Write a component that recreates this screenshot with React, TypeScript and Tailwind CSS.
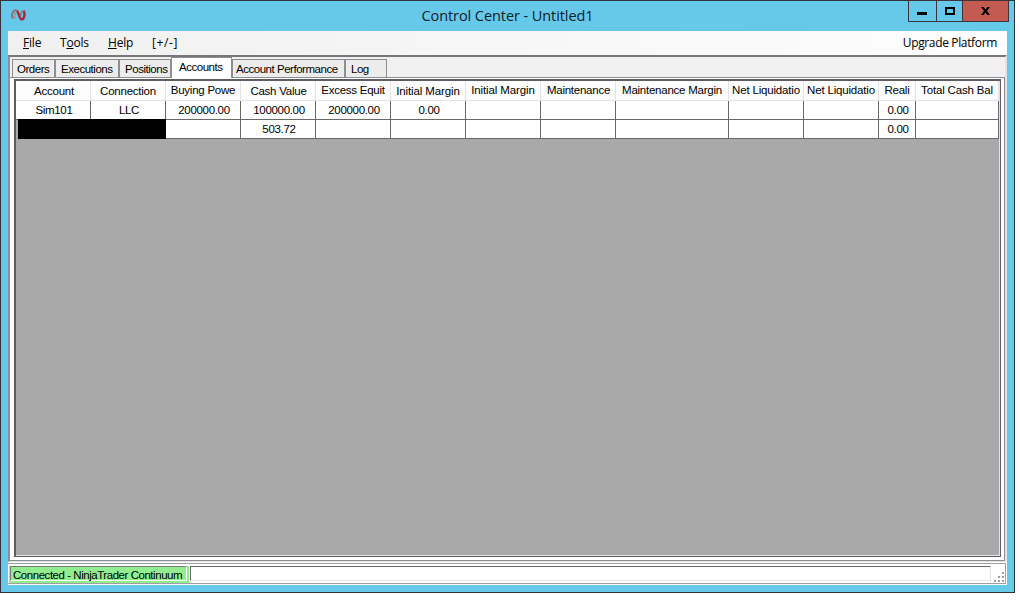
import { ReactNode } from 'react';

interface Column {
  title: string;
  width: string;
  pad?: string;
}

interface AccountRow {
  hidden?: boolean;
  cells: string[];
}

const columns: Column[] = [
  { title: 'Account', width: 'w-[75px]', pad: 'pt-px pl-[2px]' },
  { title: 'Connection', width: 'w-[75px]', pad: 'pt-px' },
  { title: 'Buying Powe', width: 'w-[75px]' },
  { title: 'Cash Value', width: 'w-[75px]', pad: 'pt-px pl-px' },
  { title: 'Excess Equit', width: 'w-[75px]' },
  { title: 'Initial Margin', width: 'w-[75px]', pad: 'pt-px tracking-[-0.12px]' },
  { title: 'Initial Margin', width: 'w-[75px]', pad: 'tracking-[-0.12px]' },
  { title: 'Maintenance', width: 'w-[75px]', pad: 'pl-px' },
  { title: 'Maintenance Margin', width: 'w-[113px]' },
  { title: 'Net Liquidatio', width: 'w-[75px]', pad: 'tracking-[-0.17px]' },
  { title: 'Net Liquidatio', width: 'w-[75px]', pad: 'tracking-[-0.17px]' },
  { title: 'Reali', width: 'w-[37px]' },
  { title: 'Total Cash Bal', width: 'w-[83px]', pad: 'tracking-[-0.17px]' },
];

const rows: AccountRow[] = [
  { cells: ['Sim101', 'LLC', '200000.00', '100000.00', '200000.00', '0.00', '', '', '', '', '', '0.00', ''] },
  { hidden: true, cells: ['', '', '', '503.72', '', '', '', '', '', '', '', '0.00', ''] },
];

const tabs = [
  { title: 'Orders', width: 'w-[43px]' },
  { title: 'Executions', width: 'w-[64px]', pad: 'pl-[5px]' },
  { title: 'Positions', width: 'w-[52px]', pad: 'pl-[5px]' },
  { title: 'Accounts', width: 'w-[61px]', active: true },
  { title: 'Account Performance', width: 'w-[113px]', pad: 'pl-[3px]' },
  { title: 'Log', width: 'w-[42px]', pad: 'pl-[5px]' },
];

function Logo() {
  return (
    <svg width="15" height="12" viewBox="0 0 15 12" fill="none">
      <path d="M2 9.500C.2 6.500 1.200 2 4 1.400c2.200-.4 3.200 2 4 4.600" stroke="#85777a" strokeWidth="2" />
      <path d="M4 10C3.200 7 3.800 4 5.800 2.800" stroke="#93999c" strokeWidth="1.600" />
      <path d="M6 2c2 1.500 2.200 7.600 4.400 8.300C13 10.800 14.400 5.500 12.800 1.600" stroke="#b02632" strokeWidth="2.400" />
      <path d="M9.600 7c.2-2.600 1-4.600 2.600-5.400" stroke="#97707d" strokeWidth="1.600" />
    </svg>
  );
}

function TitleBar() {
  return (
    <div className="relative h-[30px] shrink-0">
      <div className="absolute left-[10px] top-[8px]">
        <Logo />
      </div>
      <h1 className="pt-[4px] text-center font-['Open_Sans',sans-serif] text-[14.5px] leading-[21px] tracking-[-0.08px] text-[#10202a]">
        Control Center - Untitled1
      </h1>
      <div className="absolute right-[5px] -top-px flex h-[22px] border border-[#3b3438]">
        <button className="flex w-[28px] items-center justify-center border-r border-[#3b3438]" aria-label="Minimize">
          <span className="mt-[5px] mr-px h-[3px] w-[10px] bg-black" />
        </button>
        <button className="flex w-[26px] items-center justify-center border-r border-[#3b3438]" aria-label="Maximize">
          <span className="h-[8px] w-[10px] border-2 border-black" />
        </button>
        <button className="flex w-[45px] items-center justify-center bg-[#c35b51]" aria-label="Close">
          <svg width="9" height="8" viewBox="0 0 9 8">
            <path d="M0 0h2.700L4.500 2.500 6.300 0H9L6 4l3 4H6.300L4.500 5.500 2.700 8H0l3-4z" fill="#000" />
          </svg>
        </button>
      </div>
    </div>
  );
}

function MenuItem({ children, className }: { children: ReactNode; className: string }) {
  return <button className={`text-left ${className}`}>{children}</button>;
}

function MenuBar() {
  return (
    <div className="flex h-[24px] shrink-0 bg-linear-to-r from-[#f0f0f0] to-[#fdfdfd] pl-[15px] font-['Open_Sans',sans-serif] text-[12px] leading-[24px] text-black">
      <MenuItem className="w-[37px]"><u>F</u>ile</MenuItem>
      <MenuItem className="w-[48px]">T<u>o</u>ols</MenuItem>
      <MenuItem className="w-[44px]"><u>H</u>elp</MenuItem>
      <MenuItem className="w-[30px] tracking-[0.6px]">[+/-]</MenuItem>
      <MenuItem className="mr-[10px] ml-auto tracking-[-0.35px]">Upgrade Platform</MenuItem>
    </div>
  );
}

function TabStrip() {
  return (
    <div className="flex h-[21px] shrink-0 items-end pl-[2px] tracking-[-0.47px]">
      {tabs.map((tab) => (
        <button
          key={tab.title}
          className={`shrink-0 whitespace-nowrap text-left ${tab.width} ${
            tab.active
              ? 'relative h-[21px] border-x border-t border-[#8c8e94] bg-white pb-[3px] pl-[7px]'
              : 'mb-px h-[18px] border-x border-t border-[#8c8e94] bg-[#ececec]'
          } ${tab.active ? '' : tab.pad ?? 'pl-[4px]'}`}
        >
          {tab.title}
        </button>
      ))}
    </div>
  );
}

function AccountsGrid() {
  return (
    <div className="flex h-[478px] flex-col border-t-2 border-l-2 border-r border-b border-[#5f5d62] bg-[#a9a9a9]">
      <div className="flex flex-1 flex-col border-r border-b border-[#e3e3e3]">
        <div className="flex w-[983px] tracking-[-0.24px]">
          {columns.map((col, i) => (
            <div
              key={i}
              className={`h-[20px] shrink-0 overflow-hidden border-r border-b border-[#e2e2e2] bg-[#fcfcfc] text-center leading-[18px] whitespace-nowrap ${col.width} ${col.pad ?? ''}`}
            >
              {col.title}
            </div>
          ))}
        </div>
        {rows.map((row, r) => (
          <div key={r} className="flex w-[983px]">
            {row.hidden && <div className="-mt-px ml-[2px] h-[20px] w-[148px] shrink-0 bg-black" />}
            {row.cells.slice(row.hidden ? 2 : 0).map((cell, c) => (
              <div
                key={c}
                className={`h-[19px] shrink-0 border-r border-b border-[#696969] bg-white pl-[2px] text-center leading-[18px] tracking-[-0.32px] ${
                  columns[c + (row.hidden ? 2 : 0)].width
                }`}
              >
                {cell}
              </div>
            ))}
          </div>
        ))}
      </div>
    </div>
  );
}

function ResizeGrip() {
  return (
    <svg className="absolute right-[1px] bottom-[1px]" width="10" height="10" fill="#a0a0a0">
      <path d="M8 0h2v2H8zM4 4h2v2H4zM8 4h2v2H8zM0 8h2v2H0zM4 8h2v2H4zM8 8h2v2H8z" />
    </svg>
  );
}

function StatusBar() {
  return (
    <div className="relative mt-px mr-px flex h-[21px] shrink-0 border-t border-r border-b border-[#a0a0a0] bg-white pt-[2px] pl-px">
      <div className="h-[17px] w-[180px] shrink-0 bg-[#90ee90] pl-px">
        <div className="h-[15px] w-[177px] border-t border-l border-r border-b border-t-[#77797a] border-r-white border-b-white border-l-[#77797a] pl-[2px] leading-[17px] tracking-[-0.46px] whitespace-nowrap">
          Connected - NinjaTrader Continuum
        </div>
      </div>
      <div className="ml-px h-[15px] w-[801px] border-t border-r border-b border-l border-t-[#696969] border-r-[#e3e3e3] border-b-[#e3e3e3] border-l-[#696969]" />
      <ResizeGrip />
    </div>
  );
}

export default function App() {
  return (
    <div className="h-[600px] w-[1020px] bg-white">
      <div className="flex h-[593px] w-[1015px] flex-col border border-[#30323a] bg-[#66c9ea] font-['Liberation_Sans',Arial,sans-serif] text-[11.5px] leading-[16px] tracking-[-0.2px] text-black">
        <TitleBar />
        <div className="ml-[7px] flex h-[554px] w-[999px] flex-col bg-white">
          <MenuBar />
          <div className="flex h-[507px] shrink-0 flex-col border-t-2 border-l-2 border-r-2 border-b border-t-[#77777a] border-r-[#e3e3e3] border-b-[#e3e3e3] border-l-[#909094] bg-[#f0f0f0]">
            <TabStrip />
            <div className="-mt-px flex-1 border-t border-r border-b border-[#8c8e94] bg-white pt-px pr-[3px] pl-[4px]">
              <AccountsGrid />
            </div>
          </div>
          <StatusBar />
        </div>
      </div>
    </div>
  );
}
